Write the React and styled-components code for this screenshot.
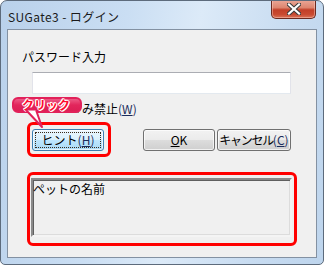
import React from "react";
import styled, { createGlobalStyle } from "styled-components";

const Global = createGlobalStyle`
  html, body { margin: 0; padding: 0; background: #ffffff; }
  body { font-family: "Noto Sans CJK JP", "Noto Sans", sans-serif; }
`;

const FONT = `"Noto Sans CJK JP", "Noto Sans", sans-serif`;

const Window = styled.div`
  width: 324px;
  height: 265px;
  box-sizing: border-box;
  display: flex;
  flex-direction: column;
  border: 1px solid #5d6b7c;
  border-radius: 7px 7px 5px 5px;
  overflow: hidden;
  background: linear-gradient(100deg, #b9d1eb 0%, #cadef3 35%, #dceaf8 55%, #c8dcf1 80%, #bed5ed 100%);
`;

const TitleBar = styled.div`
  height: 28px;
  display: flex;
  align-items: flex-start;
  padding-left: 7px;
  padding-right: 7px;
`;

const Title = styled.div`
  margin-top: 9px;
  font-family: ${FONT};
  font-size: 12px;
  line-height: 14px;
  color: #1a1a1a;
  letter-spacing: 0.4px;
  white-space: nowrap;
`;

const CloseButton = styled.div`
  margin-left: auto;
  width: 45px;
  height: 19px;
  margin-top: -1px;
  box-sizing: border-box;
  border: 1px solid #6b2a20;
  border-top: none;
  border-radius: 0 0 5px 5px;
  background: linear-gradient(#eba898 0%, #dd8670 42%, #c23f28 55%, #c94a31 80%, #da7358 100%);
  box-shadow: inset 0 0 0 1px rgba(255, 210, 200, 0.45);
  display: flex;
  align-items: center;
  justify-content: center;
`;

const Frame = styled.div`
  flex: 1;
  display: flex;
  padding: 0 6px 6px 6px;
`;

const Client = styled.div`
  position: relative;
  flex: 1;
  border: 1px solid #8391a2;
  background: #f0f0f0;
  display: flex;
  flex-direction: column;
  padding-top: 20px;
  box-sizing: border-box;
`;

const Label = styled.div`
  margin-left: 14px;
  font-family: ${FONT};
  font-size: 12px;
  line-height: 14px;
  color: #000;
`;

const TextInput = styled.div`
  margin-top: 8px;
  margin-left: 24px;
  width: 259px;
  height: 22px;
  box-sizing: border-box;
  background: #ffffff;
  border: 1px solid #e2e3ea;
  border-top-color: #abadb3;
  border-bottom-color: #e3e9ef;
`;

const CheckRow = styled.div`
  margin-top: 8px;
  margin-left: 58px;
  height: 14px;
  display: flex;
  align-items: flex-start;
  font-family: ${FONT};
  font-size: 12px;
  line-height: 14px;
  white-space: nowrap;
`;

const CheckBox = styled.span`
  width: 13px;
  height: 13px;
  margin-top: -2px;
  box-sizing: border-box;
  border: 1px solid #8e8f8f;
  background: #f4f4f4;
  margin-right: 3px;
`;

const Mnemonic = styled.span`
  color: ${(p) => p.$color || "#1b2d5c"};
  letter-spacing: 0;
  u { text-decoration: underline; }
`;

const ButtonRow = styled.div`
  margin-top: 6px;
  margin-left: 19px;
  display: flex;
  align-items: center;
`;

const Highlight = styled.div`
  border: 3px solid #ff0000;
  border-radius: 6px;
  padding: ${(p) => p.$pad};
  display: flex;
`;

const Button = styled.div`
  width: ${(p) => p.$w}px;
  height: 22px;
  margin-left: ${(p) => p.$ml || 0}px;
  box-sizing: border-box;
  border: 1px solid ${(p) => (p.$default ? "#3c7fb1" : "#707070")};
  border-radius: 3px;
  background: ${(p) =>
    p.$default
      ? "linear-gradient(#eaf6fd 0%, #d9f0fc 50%, #bee6fd 51%, #a7d9f5 100%)"
      : "linear-gradient(#f2f2f2 0%, #ebebeb 50%, #dddddd 51%, #cfcfcf 100%)"};
  box-shadow: inset 0 0 0 1px rgba(255, 255, 255, 0.7);
  display: flex;
  align-items: center;
  justify-content: center;
  font-family: ${FONT};
  font-size: 12px;
  line-height: 14px;
  letter-spacing: ${(p) => p.$ls || 0}px;
  white-space: nowrap;
  color: #000;
  position: relative;
`;

const FocusRect = styled.div`
  position: absolute;
  inset: 2px;
  border: 1px dotted #3a2a1a;
`;

const NameBox = styled.div`
  width: 261px;
  height: 59px;
  box-sizing: border-box;
  border: 2px solid;
  border-color: #8a8a8a #f4f4f4 #f4f4f4 #8a8a8a;
  box-shadow: inset 1px 1px 0 #5f5f5f, inset -1px -1px 0 #dcdcdc;
  background: #f0f0f0;
  font-family: ${FONT};
  font-size: 12px;
  line-height: 14px;
  padding: 2px 0 0 0;
  color: #000;
`;

const BottomArea = styled.div`
  margin-top: 15px;
  margin-left: 19px;
  display: flex;
`;

const Callout = styled.div`
  position: absolute;
  left: 4px;
  top: 67px;
  width: 70px;
  height: 16px;
  box-sizing: border-box;
  border: 2px solid #e2215a;
  border-radius: 6px;
  background: linear-gradient(#ec5a85 0%, #e2265c 50%, #dc1f55 100%);
  display: flex;
  align-items: center;
  padding-left: 8px;
  font-family: ${FONT};
  font-size: 12px;
  font-weight: 700;
  line-height: 12px;
  color: #ff0a2e;
  text-shadow: -1px 0 #fff, 1px 0 #fff, 0 -1px #fff, 0 1px #fff, 1px 1px #fff, -1px -1px #fff;
  white-space: nowrap;
`;

const Tail = styled.svg`
  position: absolute;
  left: 10px;
  top: 11px;
  overflow: visible;
`;

export default function App() {
  return (
    <>
      <Global />
      <Window>
        <TitleBar>
          <Title>SUGate3 - ログイン</Title>
          <CloseButton>
            <svg width="14" height="12" viewBox="0 0 14 12">
              <path
                d="M2 1.5 L12 10.5 M12 1.5 L2 10.5"
                stroke="#3b3b3b"
                strokeWidth="4.2"
                strokeLinecap="square"
              />
              <path
                d="M2 1.5 L12 10.5 M12 1.5 L2 10.5"
                stroke="#ffffff"
                strokeWidth="2.2"
                strokeLinecap="square"
              />
            </svg>
          </CloseButton>
        </TitleBar>
        <Frame>
          <Client>
            <Label>パスワード入力</Label>
            <TextInput />
            <CheckRow>
              <CheckBox />
              <span>
                み禁止<Mnemonic>(<u>W</u>)</Mnemonic>
              </span>
            </CheckRow>
            <ButtonRow>
              <Highlight $pad="4px 4px 3px 2px">
                <Button $w={72} $default>
                  <FocusRect />
                  ヒント<Mnemonic>(<u>H</u>)</Mnemonic>
                </Button>
              </Highlight>
              <Button $w={72} $ml={32}>
                <Mnemonic $color="#000">
                  <u>O</u>K
                </Mnemonic>
              </Button>
              <Button $w={74} $ml={2} $ls={-1.3}>
                キャンセル<Mnemonic>(<u>C</u>)</Mnemonic>
              </Button>
            </ButtonRow>
            <BottomArea>
              <Highlight $pad="3px 2px 6px 1px">
                <NameBox>ペットの名前</NameBox>
              </Highlight>
            </BottomArea>
            <Callout>
              <Tail width="20" height="20" viewBox="0 0 20 20">
                <path d="M2 0 L18 17 L12 0" fill="#ffffff" stroke="#e2215a" strokeWidth="2" strokeLinejoin="round" />
                <path d="M3 -1 L11 -1" stroke="#e2215a" strokeWidth="3" />
              </Tail>
              クリック
            </Callout>
          </Client>
        </Frame>
      </Window>
    </>
  );
}
